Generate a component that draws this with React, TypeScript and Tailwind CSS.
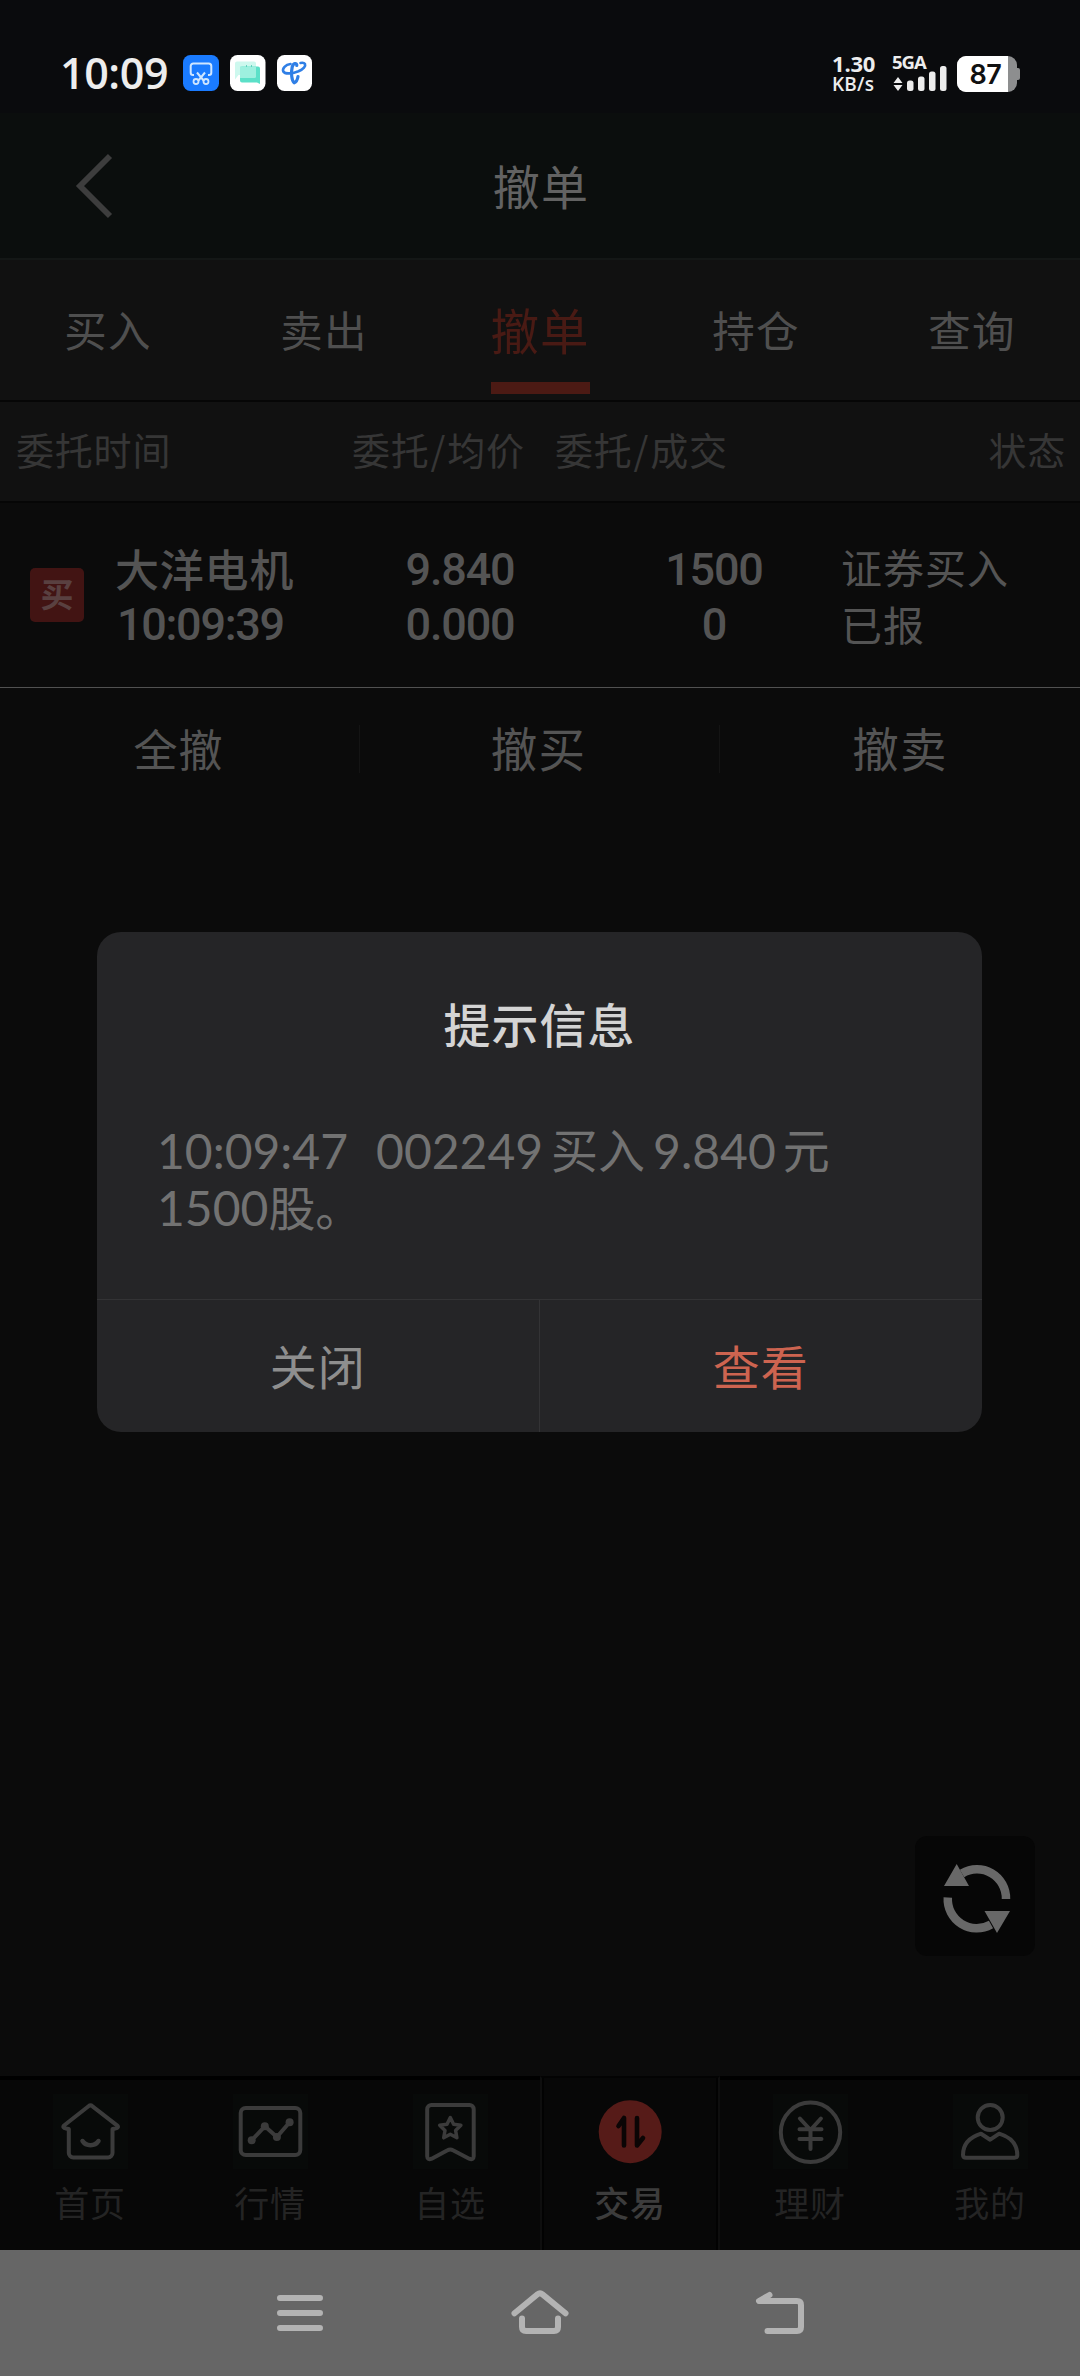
import type { ReactNode } from "react";

const cjk = "font-['Noto_Sans_CJK_SC',sans-serif]";
const digits = "font-['Roboto','Noto_Sans_CJK_SC',sans-serif]";

function StatusBar() {
  return (
    <div className="flex h-[113px] items-start justify-between bg-[#0a0b0d] pt-[55px]">
      <div className="flex pl-[60px]">
        <span className="w-[123px] font-['Open_Sans',sans-serif] text-[43px] leading-[36px] font-semibold tracking-[-0.4px] text-[#ededed]">
          10:09
        </span>
        <svg width="36" height="36" viewBox="0 0 36 36" fill="none">
          <rect width="36" height="36" rx="7.5" fill="#1a7bff" />
          <path d="M11 20H10a2.3 2.3 0 0 1-2.3-2.3V11a2.6 2.6 0 0 1 2.6-2.6h15.4A2.6 2.6 0 0 1 28.3 11v6.700a2.300 2.300 0 0 1-2.300 2.300h-1" stroke="#cfe6ff" strokeWidth="2" />
          <path d="M14 17.500l7 8.500M22 17.500l-7 8.500" stroke="#cfe6ff" strokeWidth="2" />
          <circle cx="13" cy="26.500" r="2.500" stroke="#cfe6ff" strokeWidth="1.800" />
          <circle cx="23" cy="26.500" r="2.500" stroke="#cfe6ff" strokeWidth="1.800" />
        </svg>
        <svg className="ml-[11px]" width="36" height="36" viewBox="0 0 36 36">
          <rect width="35.500" height="36" rx="7.500" fill="#fff" />
          <path d="M7 6.500h17a2 2 0 0 1 2 2V20H8.500L5 24.500v-16a2 2 0 0 1 2-2z" fill="#cdf8ee" />
          <path d="M12 11.500h16a2 2 0 0 1 2 2V29l-3-1.500H12a2 2 0 0 1-2-2v-12a2 2 0 0 1 2-2z" fill="#5be0c8" />
          <path d="M10 11.500h16v10a1.500 1.500 0 0 1-1.500 1.500H10z" fill="#9df0df" />
          <path d="M16.500 10.200v1.600M21.500 10.200v1.600" stroke="#4fc9b4" strokeWidth="1" />
        </svg>
        <svg className="ml-[10.500px]" width="36" height="36" viewBox="0 0 36 36" fill="none">
          <rect width="35" height="36" rx="7.500" fill="#fff" />
          <path d="M13.500 9C8.500 9.500 5 13.500 6.300 16.500 8 19.500 16 18.600 21.500 16.300 26.500 14 29 11 28 9c-.8-1.300-2.500-1.400-4.500-1" stroke="#2f7fe6" strokeWidth="2.600" strokeLinecap="round" />
          <path d="M19.800 10.500C20 7.300 16.200 8 15.200 12c-1.300 5.500-.7 13.500 2 15.800 2-.8 3.300-3.300 3.800-6.300" stroke="#2f7fe6" strokeWidth="3.200" strokeLinecap="round" strokeLinejoin="round" />
        </svg>
      </div>
      <div className="flex pr-[60px] font-['Open_Sans',sans-serif] font-bold text-[#ededed]">
        <div className="flex w-[60px] flex-col">
          <span className="text-[22px] leading-[16px] tracking-[-0.200px]">1.30</span>
          <span className="mt-[4px] text-[19px] leading-[18px] font-semibold tracking-[0.200px]">KB/s</span>
        </div>
        <div className="w-[65px]">
          <div className="text-[18.500px] leading-[14px] tracking-[-1px]">5GA</div>
          <svg className="-mt-[3px]" width="56" height="25" viewBox="0 0 56 25" fill="#ededed">
            <path d="M1.500 17L6 11l4.500 6zM1.500 19L6 25l4.500-6z" />
            <rect x="15" y="14.500" width="6.500" height="10.500" rx="2.500" />
            <rect x="26" y="10.500" width="6.500" height="14.500" rx="2.500" />
            <rect x="37" y="5.500" width="6.500" height="19.500" rx="2.500" />
            <rect x="48" y="0" width="6.500" height="25" rx="2.500" />
          </svg>
        </div>
        <div className="flex items-center">
          <div className="flex h-[36px] w-[60px] items-center overflow-hidden rounded-[9px] bg-[#8d8e8f]">
            <div className="flex h-full w-[51px] items-center justify-center bg-white pl-[6px] font-['Inter',sans-serif] text-[27px] leading-none font-semibold tracking-[-0.500px] text-[#111]">
              87
            </div>
          </div>
          <div className="h-[12px] w-[3px] rounded-r-[2px] bg-[#8d8e8f]" />
        </div>
      </div>
    </div>
  );
}

function Header() {
  return (
    <div className="flex h-[145px] items-center bg-[#0b0e0d]">
      <svg className="ml-[74px]" width="40" height="68" viewBox="0 0 40 68" fill="none">
        <path d="M36 4L6 34l30 30" stroke="#3d3d3d" strokeWidth="5.800" />
      </svg>
      <div className="flex-1 pr-[112px] pb-[3px] text-center text-[47px] leading-none tracking-[1.200px] text-[#626262]">撤单</div>
    </div>
  );
}

const tabs = ["买入", "卖出", "撤单", "持仓", "查询"];

function Tabs() {
  return (
    <div className="grid h-[142px] grid-cols-5 border-t-2 border-[#141716] bg-[#111111]">
      {tabs.map((t) =>
        t === "撤单" ? (
          <div key={t} className="flex flex-col items-center text-[#491a14]">
            <span className="mt-[45px] text-[48.500px] leading-[48px] tracking-[1px]">{t}</span>
            <div className="mt-[29px] h-[12px] w-[99px] bg-[#4c1a14]" />
          </div>
        ) : (
          <div key={t} className="pt-[47px] text-center text-[42.500px] leading-[44px] tracking-[1.200px] text-[#4f4f4f]">
            {t}
          </div>
        ),
      )}
    </div>
  );
}

function TableHead() {
  return (
    <div className="flex h-[103px] border-t-2 border-b-2 border-t-[#060606] border-b-[#060606] bg-[#111111] pt-[27px] text-[38px] leading-[40px] tracking-[0.800px] text-[#363636]">
      <span className="w-[336px] pl-[16px]">委托时间</span>
      <span className="w-[204px] pl-[16px]">
        委托<span className="mx-[1px]">/</span>均价
      </span>
      <span className="w-[220px] pl-[15px]">
        委托<span className="mx-[1px]">/</span>成交
      </span>
      <span className="flex-1 pr-[14px] text-right">状态</span>
    </div>
  );
}

function OrderRow() {
  return (
    <div className="flex h-[185px] border-b border-[#515151] pt-[41px] text-[#545454]">
      <div className="mt-[24px] ml-[30px] flex h-[54px] w-[54px] items-center justify-center rounded-[5px] bg-[#421413] pb-[3px] text-[33px] leading-none font-bold text-[#594040]">
        买
      </div>
      <div className="ml-[31px] w-[240px]">
        <div className="text-[44px] leading-[48px] font-medium tracking-[0.800px]">大洋电机</div>
        <div className={`mt-[9px] ml-[2px] text-[45px] leading-[48px] font-medium tracking-[-1.300px] ${digits}`}>10:09:39</div>
      </div>
      <div className={`w-[210px] pt-[2px] text-center text-[45px] leading-[48px] font-medium tracking-[-1.200px] ${digits}`}>
        <div>9.840</div>
        <div className="mt-[7px]">0.000</div>
      </div>
      <div className={`w-[298px] pt-[2px] text-center text-[45px] leading-[48px] font-medium tracking-[-1.200px] ${digits}`}>
        <div>1500</div>
        <div className="mt-[7px]">0</div>
      </div>
      <div className="-ml-[22px] text-[41px] leading-[48px] tracking-[1px]">
        <div className="-mt-[2px]">证券买入</div>
        <div className="mt-[9px]">已报</div>
      </div>
    </div>
  );
}

function Actions() {
  return (
    <div className="grid h-[122px] grid-cols-3 items-center text-center leading-none text-[#545454]">
      <div className="flex h-[48px] items-center justify-center border-r border-[#141414] pr-[2px] pb-[3px] text-[44px] tracking-[1px]">全撤</div>
      <div className="flex h-[48px] items-center justify-center border-r border-[#141414] pr-[2px] pb-[3px] text-[46.500px] tracking-[1.200px]">撤买</div>
      <div className="flex h-[48px] items-center justify-center pb-[3px] text-[46.500px] tracking-[1.200px]">撤卖</div>
    </div>
  );
}

function Dialog() {
  return (
    <div className="absolute top-[932px] left-[97px] flex h-[500px] w-[885px] flex-col overflow-hidden rounded-[24px] bg-[#252527]">
      <div className="mt-[67px] text-center text-[47px] leading-[48px] font-medium tracking-[1px] text-[#d4d4d4]">提示信息</div>
      <div className="mt-[75px] ml-[60px] flex-1 font-['Lato','Noto_Sans_CJK_SC',sans-serif] text-[48px] leading-[57px] text-[#727272]">
        <div className="flex">
          <span>10:09:47</span>
          <span className="ml-[28px]">002249</span>
          <span className="ml-[8px] text-[47px]">买入</span>
          <span className="ml-[8px]">9.840</span>
          <span className="ml-[7px] text-[47px]">元</span>
        </div>
        <div>
          1500<span className="text-[47px]">股。</span>
        </div>
      </div>
      <div className="grid h-[133px] grid-cols-2 border-t border-[#333335] text-center text-[47px] leading-[129px] tracking-[1px]">
        <div className="border-r border-[#333335] text-[#8e8e8e]">关闭</div>
        <div className="text-[#cd6450]">查看</div>
      </div>
    </div>
  );
}

function RefreshButton() {
  return (
    <div className="absolute top-[1836px] left-[915px] h-[120px] w-[120px] rounded-[12px] bg-[#060606]">
      <svg width="120" height="120" viewBox="0 0 120 120" fill="none">
        <path d="M47 37.500A29 29 0 0 1 91 63" stroke="#686868" strokeWidth="8.500" />
        <path d="M32.800 61.500A29 29 0 0 0 76 88.500" stroke="#686868" strokeWidth="8.500" />
        <path d="M41.700 28L54 50H29zM82 97L69.500 75H95z" fill="#686868" />
      </svg>
    </div>
  );
}

const navItems: { label: string; active?: boolean; icon: ReactNode }[] = [
  {
    label: "首页",
    icon: (
      <>
        <path d="M35.500 12.300a3 3 0 0 1 4 0L64 31.300c1.800 1.500.8 3.200-1.500 3.200l-3 .5V59a4.500 4.500 0 0 1-4.500 4.500H20.300a4.500 4.500 0 0 1-4.500-4.500V35l-3-.5c-2.300 0-3.300-1.700-1.500-3.200z" />
        <path d="M29.500 47c3.500 5.500 12.500 5.500 16 0" strokeWidth="4.500" />
      </>
    ),
  },
  {
    label: "行情",
    icon: (
      <>
        <rect x="7.700" y="14" width="59.600" height="47" rx="5" />
        <path d="M18.700 46.300L31.800 32.300 43.900 43 56.600 28.300" />
        <g fill="#3b3b3b" stroke="none">
          <circle cx="18.700" cy="46.300" r="4" />
          <circle cx="31.800" cy="32.300" r="4" />
          <circle cx="43.900" cy="43" r="4" />
          <circle cx="56.600" cy="28.300" r="4" />
        </g>
      </>
    ),
  },
  {
    label: "自选",
    icon: (
      <>
        <path d="M18.500 11h38a4.200 4.200 0 0 1 4.200 4.200v47c0 3-2 3.600-4.500 2.500L40 56.300a5.500 5.500 0 0 0-5.500 0L18.700 64.700c-2.500 1.100-4.500.5-4.500-2.500v-47A4.200 4.200 0 0 1 18.500 11z" />
        <path d="M37.300 23.500l3.300 6.700 7.300 1.100-5.300 5.200 1.300 7.300-6.600-3.500-6.600 3.500 1.300-7.300-5.300-5.200 7.300-1.100z" strokeWidth="3.500" />
      </>
    ),
  },
  {
    label: "交易",
    active: true,
    icon: (
      <>
        <circle cx="37.200" cy="37.700" r="31.500" fill="#561b18" stroke="none" />
        <path d="M25.500 32L31 24v27.500M44 24v27.500L50 44" stroke="#0b0505" strokeWidth="4.600" />
      </>
    ),
  },
  {
    label: "理财",
    icon: (
      <>
        <circle cx="37.500" cy="38.300" r="29.700" />
        <path d="M26.900 24.500L37.500 36l10.400-11.500M26.500 35.300h22M26.500 45h22M37.500 36v19" />
      </>
    ),
  },
  {
    label: "我的",
    icon: (
      <>
        <circle cx="37.200" cy="23.500" r="12.500" />
        <path d="M28 39.700l9.200 6 9-6C57 43 64.300 50 64.300 61c0 2-1 2.700-3 2.700H13c-2 0-3-.7-3-2.700 0-11 7.300-18 18-21.300z" />
      </>
    ),
  },
];

function BottomNav() {
  return (
    <div className="grid h-[174px] grid-cols-6 bg-[#070707] text-[35px] leading-[36px] tracking-[0.800px]">
      {navItems.map((n) => (
        <div
          key={n.label}
          className={
            n.active
              ? "border-x-2 border-t-2 border-x-[#0e0e0e] border-t-[#030303] text-[#3c3c3c]"
              : "border-t-4 border-t-black text-[#242424]"
          }
        >
          <div className={n.active ? "flex flex-col items-center border-x-2 border-[#020202] pt-[16px] pb-[31px] font-medium" : "flex flex-col items-center pt-[14px]"}>
            <svg
              className={n.active ? "" : "bg-[#080a09]"}
              width="75"
              height="75"
              viewBox="0 0 75 75"
              fill="none"
              stroke="#3b3b3b"
              strokeWidth="4"
              strokeLinecap="round"
              strokeLinejoin="round"
            >
              {n.icon}
            </svg>
            <span className="mt-[15px]">{n.label}</span>
          </div>
        </div>
      ))}
    </div>
  );
}

function SystemBar() {
  return (
    <div className="flex h-[126px] bg-[#666666] pt-[39px] pl-[274px]">
      <svg width="52" height="48" viewBox="0 0 52 48" stroke="#b3b3b3" strokeWidth="6" strokeLinecap="round">
        <path d="M6 9h40M6 24h40M6 39h40" />
      </svg>
      <svg className="ml-[184px]" width="60" height="48" viewBox="0 0 60 48" fill="none" stroke="#b3b3b3" strokeWidth="6" strokeLinecap="round" strokeLinejoin="round">
        <path d="M4.500 24.300L27.500 5.300q2.500-2 5 0L55.500 24.300M12 29.500V38q0 4 4 4h28q4 0 4-4v-8.500" />
      </svg>
      <svg className="ml-[180px]" width="60" height="48" viewBox="0 0 60 48" fill="none" stroke="#b3b3b3" strokeWidth="6" strokeLinecap="round" strokeLinejoin="round">
        <path d="M19.500 6L9 12h38q4 0 4 4v22q0 4-4 4H17.500" />
      </svg>
    </div>
  );
}

export default function App() {
  return (
    <div className={`relative flex h-[2376px] w-[1080px] flex-col overflow-hidden bg-[#0b0b0b] ${cjk}`}>
      <StatusBar />
      <Header />
      <Tabs />
      <TableHead />
      <OrderRow />
      <Actions />
      <div className="flex-1" />
      <BottomNav />
      <SystemBar />
      <RefreshButton />
      <Dialog />
    </div>
  );
}
